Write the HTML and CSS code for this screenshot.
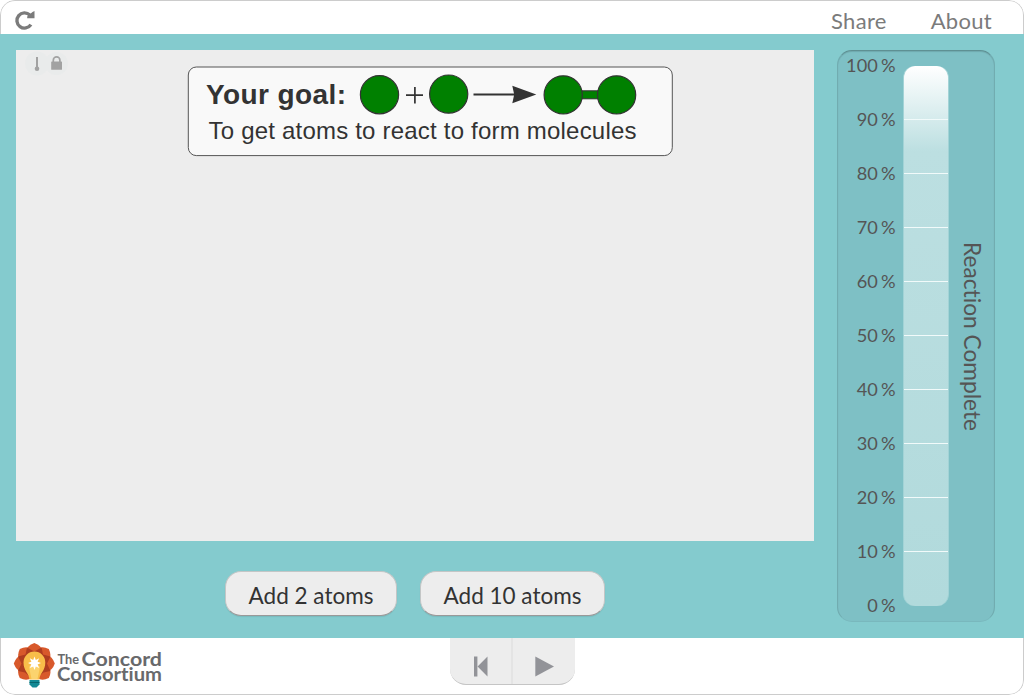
FILE: index.html
```
<!DOCTYPE html>
<html lang="en">
<head>
<meta charset="utf-8">
<title>Reaction Complete</title>
<link rel="stylesheet" href="styles.css">
</head>
<body>
<div class="app">
  <header class="topbar">
    <svg class="reload" width="22" height="22" viewBox="0 0 22 22"><path d="M16.900 15.600A7.600 7.600 0 1 1 15.800 6" fill="none" stroke="#7b7b7b" stroke-width="3.400"/><path d="M20.500 2V9.200H13.200V7.400L15.500 5.500L18.500 3Z" fill="#7b7b7b"/></svg>
    <nav class="links"><a class="share">Share</a><a class="about">About</a></nav>
  </header>
  <main class="stage">
    <section class="left">
      <div class="model">
        <svg class="status" width="60" height="32" viewBox="0 0 60 32">
          <circle cx="21" cy="13.500" r="12" fill="#e9ebeb"/><circle cx="40.500" cy="13.500" r="11.500" fill="#e9ebeb"/>
          <path d="M21 7V19" stroke="#a2a2a2" stroke-width="2"/><circle cx="21" cy="18.700" r="2.300" fill="#a2a2a2"/>
          <rect x="35.200" y="11.500" width="10.800" height="8.300" rx=".6" fill="#a2a2a2"/><path d="M37.300 12.500V10.200a3.300 3.300 0 0 1 6.600 0V12.500" fill="none" stroke="#a2a2a2" stroke-width="1.700"/>
        </svg>
        <svg class="goal" width="486" height="91" viewBox="187 66 486 91">
          <rect x="188.300" y="67" width="484" height="88.600" rx="8" fill="#f9f9f9" stroke="#555" stroke-width="1"/>
          <text class="goal-title" x="206" y="103.500" textLength="140">Your goal:</text>
          <text class="goal-text" x="208.500" y="139" textLength="428">To get atoms to react to form molecules</text>
          <path d="M406 95.200H423M414.900 87V103.500" stroke="#333" stroke-width="1.700"/>
          <path d="M473.500 94.400H515" stroke="#333" stroke-width="2"/><path d="M512.300 85.700L536.300 94.400L512.300 103.300L514.200 94.400Z" fill="#333"/>
          <rect x="580" y="90.800" width="20" height="8" fill="green" stroke="#333"/>
          <g fill="green" stroke="#333" stroke-width="1.200"><circle cx="379.500" cy="94.700" r="19.100"/><circle cx="448.700" cy="94.100" r="19.100"/><circle cx="563.200" cy="94.900" r="19.100"/><circle cx="616.600" cy="94.900" r="19.100"/></g>
        </svg>
      </div>
      <div class="actions"><button class="btn two">Add 2 atoms</button><button class="btn ten">Add 10 atoms</button></div>
    </section>
    <aside class="gauge">
      <div class="labels"><span>100 %</span><span>90 %</span><span>80 %</span><span>70 %</span><span>60 %</span><span>50 %</span><span>40 %</span><span>30 %</span><span>20 %</span><span>10 %</span><span>0 %</span></div>
      <div class="tube"><i></i><i></i><i></i><i></i><i></i><i></i><i></i><i></i><i></i><i></i></div>
      <div class="caption">Reaction Complete</div>
    </aside>
  </main>
  <footer class="bottom">
    <svg class="logo" width="152" height="50" viewBox="12 640 152 50">
      <g fill="#d8592b">
        <path id="petal" d="M34.300 668L26.300 651Q27 645.500 34.300 643Q41.600 645.500 42.300 651Z"/>
        <use href="#petal" transform="rotate(45 34.300 663.500)"/><use href="#petal" transform="rotate(90 34.300 663.500)"/><use href="#petal" transform="rotate(135 34.300 663.500)"/><use href="#petal" transform="rotate(225 34.300 663.500)"/><use href="#petal" transform="rotate(270 34.300 663.500)"/><use href="#petal" transform="rotate(315 34.300 663.500)"/>
      </g>
      <path d="M27 647.500L34.300 651.500L41.600 647.500L43 654.500L50.500 656.500L47 663.500L50.500 671L43.500 672.500L39 676H29L25 672.500L18 671L21.500 663.500L18 656.500L25.500 654.500Z" fill="#ae3d20"/>
      <path d="M29.500 679.500C29 673 23.500 671 23.500 662.500A10.900 10.900 0 0 1 45.300 662.500C45.300 671 39.800 673 39.300 679.500Z" fill="#f8bd49"/>
      <path d="M31.500 679L29 667L34.500 661L40 667L37.500 679Z" fill="#fbd36e"/>
      <path d="M34.500 656.500L35.800 660L39.200 658.300L37.600 661.700L41 663L37.600 664.500L39.200 668L35.800 666.500L34.500 670L33.200 666.500L29.800 668L31.400 664.500L28 663L31.400 661.700L29.800 658.300L33.200 660Z" fill="#fff"/>
      <path d="M29.500 680H39.500V684.500L36.500 687.500H32.500L29.500 684.500Z" fill="#138994"/><path d="M29.500 682.500H39.500" stroke="#08656d"/>
      <g class="logo-text"><text x="57.500" y="663.500" font-size="13.500" textLength="21.500" lengthAdjust="spacingAndGlyphs">The</text><text x="81.500" y="665.800" font-size="18.500" textLength="80.500" lengthAdjust="spacingAndGlyphs">Concord</text><text x="57" y="680.500" font-size="18.500" textLength="105" lengthAdjust="spacingAndGlyphs">Consortium</text></g>
    </svg>
    <div class="controls">
      <span class="control"><svg width="14" height="21" viewBox="0 0 14 21"><path d="M0 .5H3.400V20.500H0ZM3.600 10.500L13.500 .5V20.500Z" fill="#929398"/></svg></span>
      <span class="control"><svg width="19" height="21" viewBox="0 0 19 21"><path d="M.3 .5L19 10.500L.3 20.500Z" fill="#929398"/></svg></span>
    </div>
  </footer>
</div>
</body>
</html>
```
FILE: styles.css
```
* { box-sizing: border-box; }
body { margin: 0; background: #fff; font-family: Lato, sans-serif; font-variant-ligatures: none; }
.app { width: 1024px; height: 695px; display: flex; flex-direction: column; background: linear-gradient(#84cbce, #84cbce) 0 34px / 100% 604px no-repeat, #fff; border-radius: 15px; overflow: hidden; }
.topbar { height: 34px; flex: none; display: flex; justify-content: space-between; border: 1px solid #ccc; border-bottom: 0; border-radius: 15px 15px 0 0; padding: 7px 31px 0 13px; }
.links { display: flex; gap: 44px; font-size: 22px; letter-spacing: .3px; line-height: 26px; color: #7b7b7b; }
.reload { display: block; margin-top: 1px; }
.stage { height: 604px; flex: none; display: flex; align-items: flex-start; padding: 16px 29px 0 16px; justify-content: space-between; }
.left { width: 798px; }
.model { height: 491px; background: #ededed; display: flex; align-items: flex-start; }
.status { margin-right: 111px; }
.goal { margin-top: 16px; }
.goal-title { font: bold 28px "Liberation Sans", Arial, sans-serif; fill: #333; }
.goal-text { font: 24px "Liberation Sans", Arial, sans-serif; fill: #333; }
.actions { display: flex; gap: 23px; padding: 30px 0 0 209px; }
.btn { height: 45px; padding: 4px 0 0; border: 1px solid #c3c6c6; border-bottom-color: #999; border-radius: 16px; background: #ededed; color: #333; font: 22.5px Lato, sans-serif; white-space: nowrap; box-shadow: 0 1px 1px rgba(0,0,0,.08); }
.two { width: 172px; }
.ten { width: 185px; }
.gauge { width: 158px; height: 572px; display: flex; border: 1px solid rgba(0,0,0,.1); border-bottom-color: rgba(0,0,0,.04); border-top-color: rgba(0,0,0,.25); border-radius: 15px; background: #7ec0c5; box-shadow: inset 0 1px 1px rgba(0,0,0,.12); padding-top: 15px; color: #555; }
.labels { width: 57.500px; display: flex; flex-direction: column; text-align: right; font-size: 18.200px; margin-top: -14px; word-spacing: -1.500px; }
.labels span { height: 54px; line-height: 26px; flex: none; }
.tube { width: 46px; height: 540px; margin-left: 7px; border-radius: 12px; overflow: hidden; display: flex; flex-direction: column; background: linear-gradient(#fff 0, #bcdfe1 85px, #b1dadc 100%); border-left: 1px solid #a2d3d6; border-right: 1px solid #a2d3d6; }
.tube i { height: 54px; flex: none; border-bottom: 1px solid #f1fafa; }
.tube i:last-child { border: 0; }
.caption { writing-mode: vertical-rl; font-size: 22.700px; line-height: 28px; height: 540px; text-align: center; margin-left: 9px; }
.bottom { height: 57px; flex: none; display: flex; align-items: flex-start; border: 1px solid #ccc; border-top: 0; border-radius: 0 0 15px 15px; padding-left: 11px; }
.logo { margin-top: 2px; }
.controls { width: 125px; height: 47px; margin-left: 286px; display: flex; background: #ededed; border-radius: 0 0 16px 16px; border-bottom: 1px solid #c5c5c5; }
.control { width: 61px; display: flex; align-items: center; justify-content: center; padding-top: 10px; }
.control + .control { width: 64px; border-left: 2px solid #e4e4e4; }
.logo-text { font-family: Lato, sans-serif; font-weight: bold; fill: #68696b; }
```
